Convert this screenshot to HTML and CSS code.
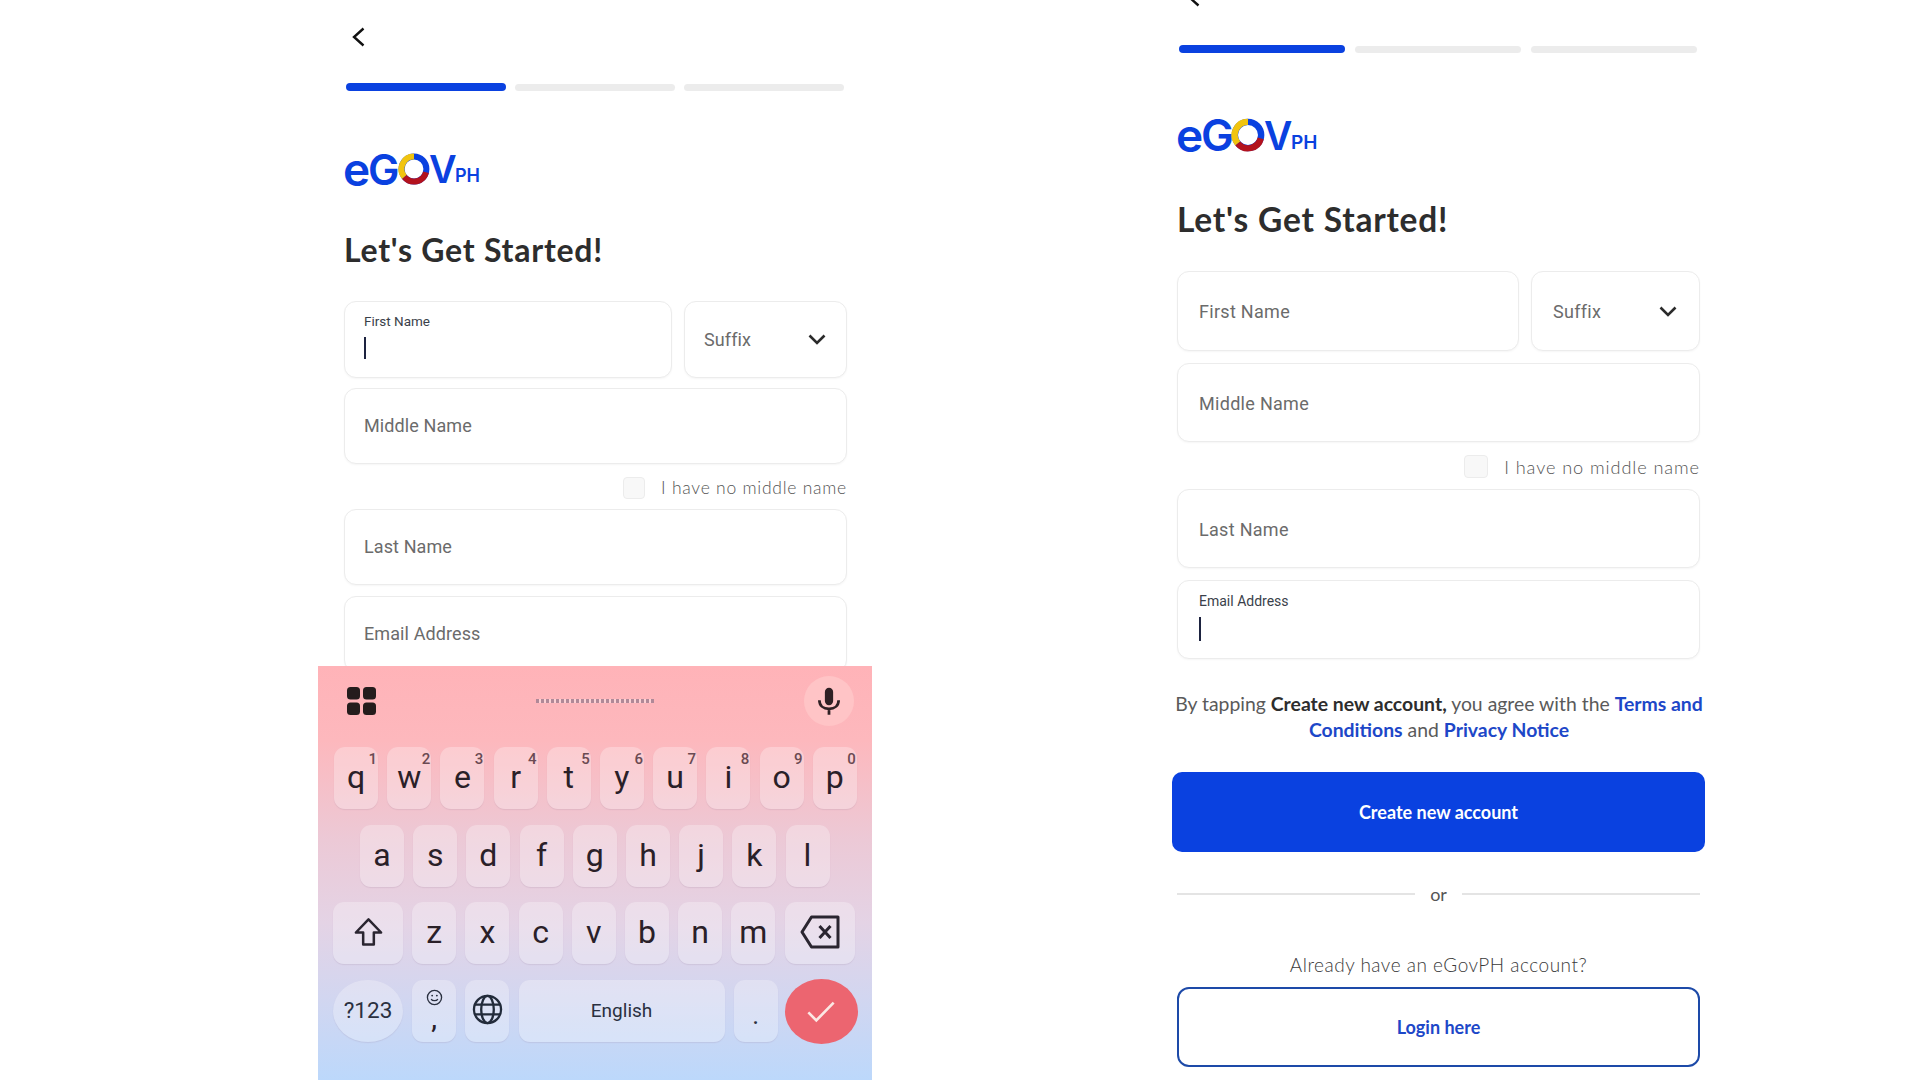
FILE: index.html
```html
<!DOCTYPE html>
<html lang="en">
<head>
<meta charset="utf-8">
<title>eGovPH - Let's Get Started</title>
<link rel="stylesheet" href="styles.css">
</head>
<body>
<main class="stage">
  <section class="screen screen-a">
    <svg class="back" viewBox="0 0 13 20"><path d="M11.5 1.5 2 10l9.5 8.5"/></svg>
    <div class="steps"><i class="step on"></i><i class="step"></i><i class="step"></i></div>
    <div class="logo"><span class="l-e">e</span><span class="l-g">G</span><svg class="l-o" viewBox="0 0 40 40"><circle class="r-b" cx="20" cy="20" r="15.5"/><path class="r-y" d="M20 4.5A15.5 15.5 0 0 0 8 30"/><path class="r-r" d="M8 30A15.5 15.5 0 0 0 35 24"/></svg><span class="l-v">V</span><span class="l-p">PH</span></div>
    <h1>Let's Get Started!</h1>
    <div class="row">
      <div class="field grow active"><span class="mini">First Name</span><i class="caret"></i></div>
      <div class="field suffix"><span class="ph">Suffix</span><svg class="chev" viewBox="0 0 18 11"><path d="M1.5 1.5 9 9l7.5-7.5"/></svg></div>
    </div>
    <div class="field"><span class="ph">Middle Name</span></div>
    <div class="nomid"><i class="box"></i><span>I have no middle name</span></div>
    <div class="field"><span class="ph">Last Name</span></div>
    <div class="field email"><span class="ph">Email Address</span></div>

    <div class="kbd">
      <div class="kbar">
        <svg class="grid-ic" viewBox="0 0 29 28"><rect x="0" y="0" width="13" height="12.5" rx="3.5"/><rect x="16" y="0" width="13" height="12.5" rx="3.5"/><rect x="0" y="15.5" width="13" height="12.5" rx="3.5"/><rect x="16" y="15.5" width="13" height="12.5" rx="3.5"/></svg>
        <i class="hint"></i>
        <span class="micwrap"><svg class="mic" viewBox="0 0 24 30"><rect x="7.5" y="0" width="9" height="19" rx="4.5"/><path class="mic-s" d="M1.5 13.5c0 6 4.500 9.500 10.500 9.500s10.500-3.500 10.500-9.500M12 23v6.500"/></svg></span>
      </div>
      <div class="krow r1">
        <span class="key">q<sup>1</sup></span><span class="key">w<sup>2</sup></span><span class="key">e<sup>3</sup></span><span class="key">r<sup>4</sup></span><span class="key">t<sup>5</sup></span><span class="key">y<sup>6</sup></span><span class="key">u<sup>7</sup></span><span class="key">i<sup>8</sup></span><span class="key">o<sup>9</sup></span><span class="key">p<sup>0</sup></span>
      </div>
      <div class="krow r2">
        <span class="key">a</span><span class="key">s</span><span class="key">d</span><span class="key">f</span><span class="key">g</span><span class="key">h</span><span class="key">j</span><span class="key">k</span><span class="key">l</span>
      </div>
      <div class="krow r3">
        <span class="key wide"><svg class="shift" viewBox="0 0 32 32"><path d="M16 2.500 3 16h7.500v12.500h11V16H29z"/></svg></span>
        <span class="key">z</span><span class="key">x</span><span class="key">c</span><span class="key">v</span><span class="key">b</span><span class="key">n</span><span class="key">m</span>
        <span class="key wide back-k"><svg class="bksp" viewBox="0 0 40 34"><path d="M11.500 2H38v30H11.500L2 17z"/><path d="M19.500 11l11 12M30.500 11l-11 12"/></svg></span>
      </div>
      <div class="krow r4">
        <span class="key wide sym">?123</span>
        <span class="key emo"><svg class="smile" viewBox="0 0 18 18"><circle cx="9" cy="9" r="7.500"/><path d="M5.500 10.500c1 2.500 6 2.500 7 0"/><circle class="dot" cx="6.500" cy="7" r="1"/><circle class="dot" cx="11.500" cy="7" r="1"/></svg><b>,</b></span>
        <span class="key"><svg class="globe" viewBox="0 0 32 32"><circle cx="16" cy="16" r="14"/><ellipse cx="16" cy="16" rx="6.500" ry="14"/><path d="M3 11h26M3 21h26"/></svg></span>
        <span class="key space">English</span>
        <span class="key dotk">.</span>
        <span class="enter"><svg class="tick" viewBox="0 0 32 24"><path d="M2.500 13 11 21.500 29.500 2.500"/></svg></span>
      </div>
    </div>
  </section>

  <section class="screen screen-b">
    <svg class="back" viewBox="0 0 13 20"><path d="M11.500 1.500 2 10l9.500 8.500"/></svg>
    <div class="steps"><i class="step on"></i><i class="step"></i><i class="step"></i></div>
    <div class="logo"><span class="l-e">e</span><span class="l-g">G</span><svg class="l-o" viewBox="0 0 40 40"><circle class="r-b" cx="20" cy="20" r="15.500"/><path class="r-y" d="M20 4.500A15.500 15.500 0 0 0 8 30"/><path class="r-r" d="M8 30A15.500 15.500 0 0 0 35 24"/></svg><span class="l-v">V</span><span class="l-p">PH</span></div>
    <h1>Let's Get Started!</h1>
    <div class="row">
      <div class="field grow"><span class="ph">First Name</span></div>
      <div class="field suffix"><span class="ph">Suffix</span><svg class="chev" viewBox="0 0 18 11"><path d="M1.500 1.500 9 9l7.500-7.500"/></svg></div>
    </div>
    <div class="field"><span class="ph">Middle Name</span></div>
    <div class="nomid"><i class="box"></i><span>I have no middle name</span></div>
    <div class="field"><span class="ph">Last Name</span></div>
    <div class="field active"><span class="mini">Email Address</span><i class="caret"></i></div>
    <p class="terms">By tapping <strong>Create new account,</strong> you agree with the <a>Terms and</a><br><a>Conditions</a> and <a>Privacy Notice</a></p>
    <button class="primary">Create new account</button>
    <div class="or"><i></i><span>or</span><i></i></div>
    <p class="already">Already have an eGovPH account?</p>
    <button class="outline">Login here</button>
  </section>
</main>
</body>
</html>
```

FILE: styles.css
```css
* { box-sizing: border-box; }
html, body { margin: 0; height: 100%; background: #fff; overflow: hidden; }
.stage { display: flex; width: 1920px; height: 1080px; padding-left: 318px; font-family: Lato, "Noto Sans", sans-serif; color: #2b2b2b; }
.screen { position: relative; height: 1080px; display: flex; flex-direction: column; flex: none; }
.screen-a { width: 554px; padding: 27px 25px 0 26px; overflow: hidden; }
.screen-b { width: 534px; margin-left: 300px; padding: 0 6px 0 5px; }

/* back + steps */
.back { display: block; width: 13px; height: 20px; margin-left: 8px; fill: none; stroke: #111; stroke-width: 2.400; flex: none; }
.screen-b .back { margin: -13px 0 0 10px; }
.steps { display: flex; gap: 9px; margin: 36px 3px 0 2px; height: 8px; align-items: center; flex: none; }
.screen-b .steps { margin: 38px 3px 0 2px; gap: 10px; }
.step { flex: 1; height: 7px; border-radius: 3.5px; background: #ececec; }
.step.on { height: 8px; border-radius: 4px; background: #0a41e0; }

/* logo */
.logo { display: flex; align-items: flex-end; height: 31px; margin: 63px 0 0 -1px; color: #0a41e0; font: 600 42px/31px Inter, sans-serif; flex: none; }
.screen-b .logo { margin-top: 66px; height: 33px; font-size: 44px; line-height: 33px; }
.logo span { display: block; }
.logo .l-e { width: 25px; font-size: 46px; }
.l-g { width: 31px; }
.l-o { width: 32px; height: 32px; margin: 0 -1px; fill: none; stroke-width: 7.500; flex: none; }
.screen-b .l-o { width: 34px; height: 34px; }
.r-b { stroke: #0a41e0; }
.r-y { stroke: #f1c40f; }
.r-r { stroke: #b3121d; }
.logo .l-v { width: 26px; font-size: 38px; }
.screen-b .logo .l-v { width: 27px; font-size: 39px; }
.logo .l-p { font-size: 18px; line-height: 18px; font-weight: 600; }
.screen-b .logo .l-p { font-size: 19px; line-height: 19px; }

h1 { margin: 45px 0 0; font: 700 32px/40px Lato, sans-serif; letter-spacing: .75px; color: #2d2d2d; flex: none; }
.screen-b h1 { margin-top: 47px; font-size: 33.500px; letter-spacing: .8px; }

/* fields */
.row { display: flex; gap: 12px; flex: none; margin-top: 31px; }
.screen-b .row { margin-top: 32px; }
.field { flex: none; height: 76px; padding-left: 19px; margin-top: 10px; display: flex; align-items: center; background: #fff; border: 1.500px solid #ececec; border-radius: 12px; box-shadow: 0 1px 2px rgba(0,0,0,.04); }
.row .field { margin-top: 0; height: 77px; }
.email { margin-top: 11px; }
.screen-b .field { height: 79px; margin-top: 12px; padding-left: 21px; }
.screen-b .row .field { margin-top: 0; height: 80px; }
.grow { flex: 1; }
.suffix { width: 163px; justify-content: space-between; padding-right: 20px; }
.screen-b .suffix { width: 169px; padding-right: 22px; }
.ph { font: 400 18px/22px Roboto, sans-serif; color: #6b6b6b; letter-spacing: .1px; }
.screen-b .ph { letter-spacing: .3px; position: relative; top: 1px; }
.chev { width: 18px; height: 11px; fill: none; stroke: #2b2b2b; stroke-width: 2.600; }
.active { flex-direction: column; align-items: flex-start; padding-top: 10px; }
.screen-b .active { padding-top: 11px; }
.mini { font: 400 13.500px/18px Roboto, sans-serif; color: #3a3f4a; }
.screen-b .mini { font-size: 14px; }
.caret { display: block; width: 2px; height: 22px; margin-top: 7px; background: #1d2340; }
.screen-b .caret { height: 24px; margin-top: 7px; }

.nomid { display: flex; align-items: center; justify-content: flex-end; gap: 16px; margin: 13px 0 0; height: 22px; font: 300 17.500px/22px Lato, sans-serif; color: #555; flex: none; letter-spacing: .75px; }
.screen-b .nomid { height: 23px; margin: 13px 0 -1px; font-size: 18.200px; letter-spacing: .9px; gap: 16px; }
.box { width: 22px; height: 22px; background: #f8f8f8; border: 1px solid #ececec; border-radius: 4px; }
.screen-b .box { width: 24px; height: 23px; }

/* right column text */
.terms { margin: 32px -6px 0 -5px; padding: 0; text-align: center; font: 400 19.400px/26px Lato, sans-serif; color: #5a5a5a; flex: none; white-space: nowrap; }
.terms strong { font-weight: 700; color: #2d2d2d; }
.terms a { color: #1d47c8; font-weight: 700; }
.primary { margin: 29px -5px 0; height: 80px; flex: none; background: #0a41e0; color: #fff; border: 0; border-radius: 10px; font: 700 18px/22px Lato, sans-serif; }
.or { display: flex; align-items: center; gap: 15px; height: 22px; margin-top: 31px; font: 400 18px/22px Lato, sans-serif; color: #555; flex: none; }
.or i { flex: 1; height: 1.500px; background: #e4e4e4; }
.already { margin: 48px 0 0; text-align: center; font: 300 19px/24px Lato, sans-serif; color: #3a3a3a; letter-spacing: .5px; flex: none; }
.outline { margin-top: 10px; height: 80px; flex: none; background: #fff; border: 2px solid #1d4aa8; border-radius: 12px; color: #1d47c8; font: 700 18px/22px Lato, sans-serif; }

/* keyboard */
.kbd { position: absolute; left: 0; right: 0; top: 666px; height: 414px; display: flex; flex-direction: column; padding: 0 14px 0 16px; font-family: Roboto, sans-serif; color: #2a2028; background: linear-gradient(180deg, #ffb3b8 0%, #fdb8bd 18%, #ecc9d6 42%, #e4d3e5 62%, #d2d6f0 80%, #bcd8fb 100%); }
.kbar { height: 81px; display: flex; align-items: center; flex: none; padding: 0 0 11px 13px; }
.grid-ic { width: 29px; height: 28px; fill: #241c1c; flex: none; }
.hint { width: 118px; height: 4px; margin-left: 160px; opacity: .6; background: repeating-linear-gradient(90deg, #7d6a80 0 3px, #fbe2e4 3px 5px); flex: none; }
.micwrap { width: 50px; height: 50px; margin-left: auto; border-radius: 50%; background: #ffc4c6; display: flex; align-items: center; justify-content: center; flex: none; margin-right: 4px; }
.mic { width: 22px; height: 29px; fill: #2f2024; }
.mic-s { fill: none; stroke: #2f2024; stroke-width: 3; }
.krow { display: flex; gap: 9.200px; height: 62px; flex: none; margin-bottom: 15.500px; }
.r2 { padding-left: 26px; }
.r3, .r4 { margin-left: -1px; }
.key { position: relative; flex: none; width: 44px; height: 62px; padding-bottom: 2px; display: flex; align-items: center; justify-content: center; border-radius: 11px; background: rgba(255,255,255,.28); box-shadow: 0 1px 1px rgba(140,110,140,.16); font-size: 32px; line-height: 1; }
.key sup { position: absolute; top: 3px; right: 1px; font: 500 15px/18px Roboto, sans-serif; color: #6b4a52; }
.r3 .key.wide, .r4 .key.wide { width: 70px; }
.sym { border-radius: 50% !important; padding-bottom: 0; font-size: 22.500px; color: #2a3040; }
.emo { flex-direction: column; gap: 0; }
.emo b { font: 500 26px/24px Roboto, sans-serif; height: 24px; margin-top: 1px; }
.smile { width: 17px; height: 17px; fill: none; stroke: #2a3040; stroke-width: 1.400; }
.smile .dot { fill: #2a3040; stroke: none; }
.globe { width: 31px; height: 31px; fill: none; stroke: #222b3a; stroke-width: 2.400; }
.space { width: 206px; padding-bottom: 0; font-size: 19px; color: #2a3040; background: rgba(255,255,255,.3); }
.dotk { align-items: flex-end; padding-bottom: 14px; font-size: 26px; color: #2a3040; }
.enter { flex: none; width: 73px; height: 65px; margin: -1px 0 0 -2px; border-radius: 50%; background: #ec6570; display: flex; align-items: center; justify-content: center; }
.tick { width: 30px; height: 23px; fill: none; stroke: #fbe8e4; stroke-width: 2.800; }
.shift { width: 31px; height: 31px; fill: none; stroke: #2a2530; stroke-width: 2.600; stroke-linejoin: round; }
.bksp { width: 40px; height: 34px; fill: none; stroke: #2a2530; stroke-width: 3; stroke-linejoin: round; }
```
